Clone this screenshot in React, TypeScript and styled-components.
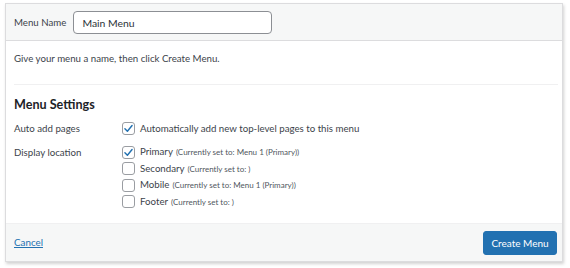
import React from "react";
import styled, { createGlobalStyle } from "styled-components";

const Global = createGlobalStyle`
  html, body { margin: 0; padding: 0; background: #ffffff; }
  body { font-family: Lato, "Open Sans", Arial, sans-serif; color: #3c434a; }
  * { box-sizing: border-box; }
`;

const Page = styled.div`
  padding: 3px 7px 6px 5px;
`;

const Panel = styled.div`
  border: 1px solid #dcdcde;
  background: #ffffff;
  box-shadow: 1px 2px 3px rgba(0, 0, 0, 0.18);
  height: 259px;
  display: flex;
  flex-direction: column;
`;

const Header = styled.div`
  background: #f6f7f7;
  border-bottom: 1px solid #dcdcde;
  height: 37px;
  display: flex;
  align-items: center;
  padding: 0 0 0 8px;
  gap: 7px;
`;

const Label = styled.label`
  font-size: 9.7px;
  color: #3c434a;
`;

const NameInput = styled.input`
  width: 199px;
  height: 23px;
  border: 1px solid #8c8f94;
  border-radius: 4px;
  padding: 0 8px;
  font-family: inherit;
  font-size: 10.4px;
  color: #2c3338;
  background: #fff;
  margin-top: 1px;
  outline: none;
`;

const Body = styled.div`
  flex: 1;
  padding: 0 4px 0 8px;
  display: flex;
  flex-direction: column;
`;

const Intro = styled.p`
  margin: 0;
  font-size: 9.7px;
  line-height: 13px;
  height: 44px;
  padding-top: 11px;
  border-bottom: 1px solid #f0f0f1;
`;

const Heading = styled.h3`
  margin: 10px 0 5px;
  font-size: 12.6px;
  font-weight: 700;
  color: #1d2327;
  line-height: 20px;
`;

const SettingRow = styled.div`
  display: grid;
  grid-template-columns: 108px 1fr;
  align-items: start;
  margin-bottom: 7px;
`;

const RowLabel = styled.div`
  font-size: 9.7px;
  line-height: 17px;
`;

const Options = styled.div`
  display: flex;
  flex-direction: column;
`;

const Option = styled.label`
  display: flex;
  align-items: center;
  gap: 5px;
  height: 16.5px;
  font-size: 9.7px;
  color: #3c434a;
  line-height: 17px;
`;

const Box = styled.span<{ $checked?: boolean }>`
  width: 13px;
  height: 13px;
  border: 1px solid #9a9da2;
  border-radius: 3px;
  background: #fff;
  display: inline-flex;
  align-items: center;
  justify-content: center;
  flex: none;
`;

const Note = styled.span`
  font-size: 8px;
  color: #50575e;
  margin-left: 3px;
`;

const Footer = styled.div`
  background: #f6f7f7;
  border-top: 1px solid #f0f0f1;
  height: 38px;
  display: flex;
  align-items: center;
  justify-content: space-between;
  padding: 0 5px 0 8px;
`;

const CancelLink = styled.a`
  font-size: 9.8px;
  color: #2271b1;
  text-decoration: underline;
  margin-top: -1px;
`;

const PrimaryButton = styled.button`
  background: #2271b1;
  border: 1px solid #2271b1;
  border-radius: 3px;
  color: #fff;
  font-family: inherit;
  font-size: 10px;
  height: 24px;
  width: 74px;
  padding: 0;
  margin-top: 1px;
`;

const Check = () => (
  <svg width="11" height="11" viewBox="0 0 20 20">
    <path d="M3.5 10.5 L8 15 L16.5 4.5" fill="none" stroke="#2271b1" strokeWidth="2.6" strokeLinecap="round" strokeLinejoin="round" />
  </svg>
);

const CheckOption = ({ checked, label, note }: { checked?: boolean; label: string; note?: string }) => (
  <Option>
    <Box $checked={checked}>{checked && <Check />}</Box>
    <span>
      {label}
      {note && <Note>{note}</Note>}
    </span>
  </Option>
);

export default function App() {
  return (
    <>
      <Global />
      <Page>
        <Panel>
          <Header>
            <Label>Menu Name</Label>
            <NameInput defaultValue="Main Menu" />
          </Header>
          <Body>
            <Intro>Give your menu a name, then click Create Menu.</Intro>
            <Heading>Menu Settings</Heading>
            <SettingRow>
              <RowLabel>Auto add pages</RowLabel>
              <Options>
                <CheckOption checked label="Automatically add new top-level pages to this menu" />
              </Options>
            </SettingRow>
            <SettingRow>
              <RowLabel>Display location</RowLabel>
              <Options>
                <CheckOption checked label="Primary" note="(Currently set to: Menu 1 (Primary))" />
                <CheckOption label="Secondary" note="(Currently set to: )" />
                <CheckOption label="Mobile" note="(Currently set to: Menu 1 (Primary))" />
                <CheckOption label="Footer" note="(Currently set to: )" />
              </Options>
            </SettingRow>
          </Body>
          <Footer>
            <CancelLink href="#">Cancel</CancelLink>
            <PrimaryButton>Create Menu</PrimaryButton>
          </Footer>
        </Panel>
      </Page>
    </>
  );
}
